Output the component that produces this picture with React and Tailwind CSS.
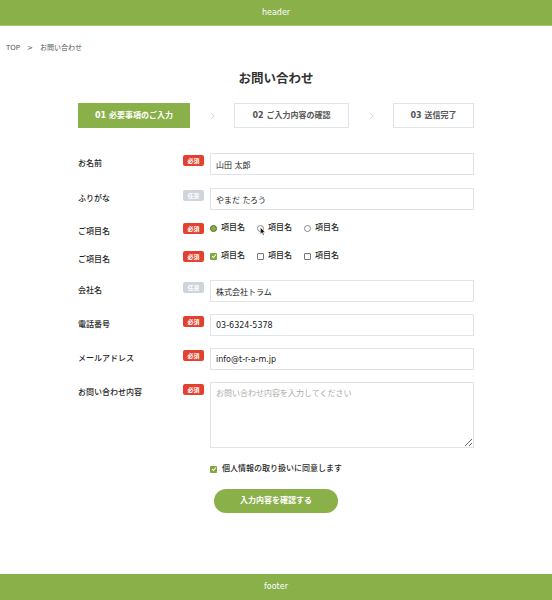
import { useState } from 'react';

const font = { fontFamily: '"DejaVu Sans", "Noto Sans CJK JP", sans-serif' };

const Badge = ({ required }) => (
  <span
    className={`mt-[2px] flex h-[11px] w-[21px] shrink-0 items-center justify-center rounded-[2px] text-[6px] font-bold leading-none text-white ${
      required ? 'bg-[#e3412f]' : 'bg-[#cfd3db]'
    }`}
  >
    {required ? '必須' : '任意'}
  </span>
);

const Row = ({ label, required, className = '', children }) => (
  <div className={`flex items-start ${className}`}>
    <div className="w-[105px] shrink-0 text-[8px] font-medium leading-[22px] text-[#1f1f1f]">{label}</div>
    <Badge required={required} />
    <div className="ml-[6px] w-[265px] text-[8px] leading-none">{children}</div>
  </div>
);

const TextInput = ({ value }) => (
  <input
    defaultValue={value}
    className="block h-[22px] w-full border border-[#dfe3ea] bg-white px-[5px] text-[8px] text-[#222] outline-none"
    style={font}
  />
);

const Radio = ({ checked }) =>
  checked ? (
    <span className="h-[7px] w-[7px] rounded-full border border-[#4d6a25] bg-[#8ab04a]" />
  ) : (
    <span className="h-[7px] w-[7px] rounded-full border border-[#888] bg-white" />
  );

const Check = ({ checked }) =>
  checked ? (
    <span className="flex h-[7px] w-[7px] items-center justify-center rounded-[1px] bg-[#7fa83e]">
      <svg viewBox="0 0 8 8" className="h-[6px] w-[6px]">
        <path d="M1.5 4.2 L3.3 6 L6.6 2" fill="none" stroke="white" strokeWidth="1.4" />
      </svg>
    </span>
  ) : (
    <span className="h-[7px] w-[7px] rounded-[1px] border border-[#777] bg-white" />
  );

const Chevron = () => (
  <svg viewBox="0 0 6 10" className="h-[8px] w-[5px]">
    <path d="M1 1 L5 5 L1 9" fill="none" stroke="#c9ccd2" strokeWidth="1" />
  </svg>
);

const Pointer = () => (
  <svg viewBox="0 0 8 12" className="pointer-events-none absolute left-[3px] top-[3px] h-[9px] w-[6px]">
    <path d="M0.5 0.5 L0.5 9.5 L2.7 7.5 L4.2 11 L5.6 10.4 L4.1 7 L7 7 Z" fill="#111" stroke="white" strokeWidth="0.7" />
  </svg>
);

const Option = ({ children }) => <span className="relative flex items-center gap-[4px]">{children}</span>;

export default function App() {
  const [agree, setAgree] = useState(true);

  return (
    <div className="flex min-h-[600px] flex-col bg-white text-[#333]" style={font}>
      <header className="flex h-[26px] items-center justify-center border-b border-[#a9cc6c] bg-[#8ab04a] text-[8px] text-white">
        header
      </header>

      <main className="flex-1">
        <div className="mt-[17px] flex h-[10px] items-center gap-[7px] px-[6px] text-[7px] leading-[10px] text-[#555]">
          <span>TOP</span>
          <span>&gt;</span>
          <span>お問い合わせ</span>
        </div>

        <div className="mx-auto w-[396px]">
          <h1 className="mt-[18px] text-center text-[12.5px] font-bold leading-[16px] text-[#333]">お問い合わせ</h1>

          <div className="mt-[16px] flex items-center justify-between">
            <div className="flex h-[25px] w-[112px] items-center justify-center bg-[#8ab04a] text-[8px] font-bold text-white">
              01&nbsp;必要事項のご入力
            </div>
            <Chevron />
            <div className="flex h-[25px] w-[115px] items-center justify-center border border-[#dfe3ea] text-[8px] font-bold text-[#555]">
              02&nbsp;ご入力内容の確認
            </div>
            <Chevron />
            <div className="flex h-[25px] w-[81px] items-center justify-center border border-[#dfe3ea] text-[8px] font-bold text-[#555]">
              03&nbsp;送信完了
            </div>
          </div>

          <div className="mt-[25px]">
            <Row label="お名前" required>
              <TextInput value="山田 太郎" />
            </Row>
            <Row label="ふりがな" className="mt-[13px]">
              <TextInput value="やまだ たろう" />
            </Row>
            <Row label="ご項目名" required className="mt-[11px]">
              <div className="flex h-[14px] items-center gap-[12px] font-medium text-[#1f1f1f]">
                <Option>
                  <Radio checked />
                  項目名
                </Option>
                <Option>
                  <Radio />
                  項目名
                  <Pointer />
                </Option>
                <Option>
                  <Radio />
                  項目名
                </Option>
              </div>
            </Row>
            <Row label="ご項目名" required className="mt-[6px]">
              <div className="flex h-[14px] items-center gap-[12px] font-medium text-[#1f1f1f]">
                <Option>
                  <Check checked />
                  項目名
                </Option>
                <Option>
                  <Check />
                  項目名
                </Option>
                <Option>
                  <Check />
                  項目名
                </Option>
              </div>
            </Row>
            <Row label="会社名" className="mt-[9px]">
              <TextInput value="株式会社トラム" />
            </Row>
            <Row label="電話番号" required className="mt-[12px]">
              <TextInput value="03-6324-5378" />
            </Row>
            <Row label="メールアドレス" required className="mt-[12px]">
              <TextInput value="info@t-r-a-m.jp" />
            </Row>
            <Row label="お問い合わせ内容" required className="mt-[12px]">
              <textarea
                placeholder="お問い合わせ内容を入力してください"
                className="block h-[66px] w-full border border-[#dfe3ea] bg-white px-[5px] py-[5px] text-[8px] leading-[12px] text-[#333] outline-none placeholder:text-[#aaa]"
                style={font}
              />
            </Row>
          </div>

          <label
            className="mt-[15px] flex h-[12px] cursor-pointer items-center justify-center gap-[5px] text-[8px] font-medium text-[#1f1f1f]"
            onClick={() => setAgree(!agree)}
          >
            <Check checked={agree} />
            個人情報の取り扱いに同意します
          </label>

          <div className="mt-[14px] flex justify-center">
            <button className="h-[24px] w-[124px] rounded-full bg-[#8ab04a] text-[8px] font-bold text-white">
              入力内容を確認する
            </button>
          </div>
        </div>
      </main>

      <footer className="flex h-[26px] items-center justify-center bg-[#8ab04a] text-[8px] text-white">footer</footer>
    </div>
  );
}
